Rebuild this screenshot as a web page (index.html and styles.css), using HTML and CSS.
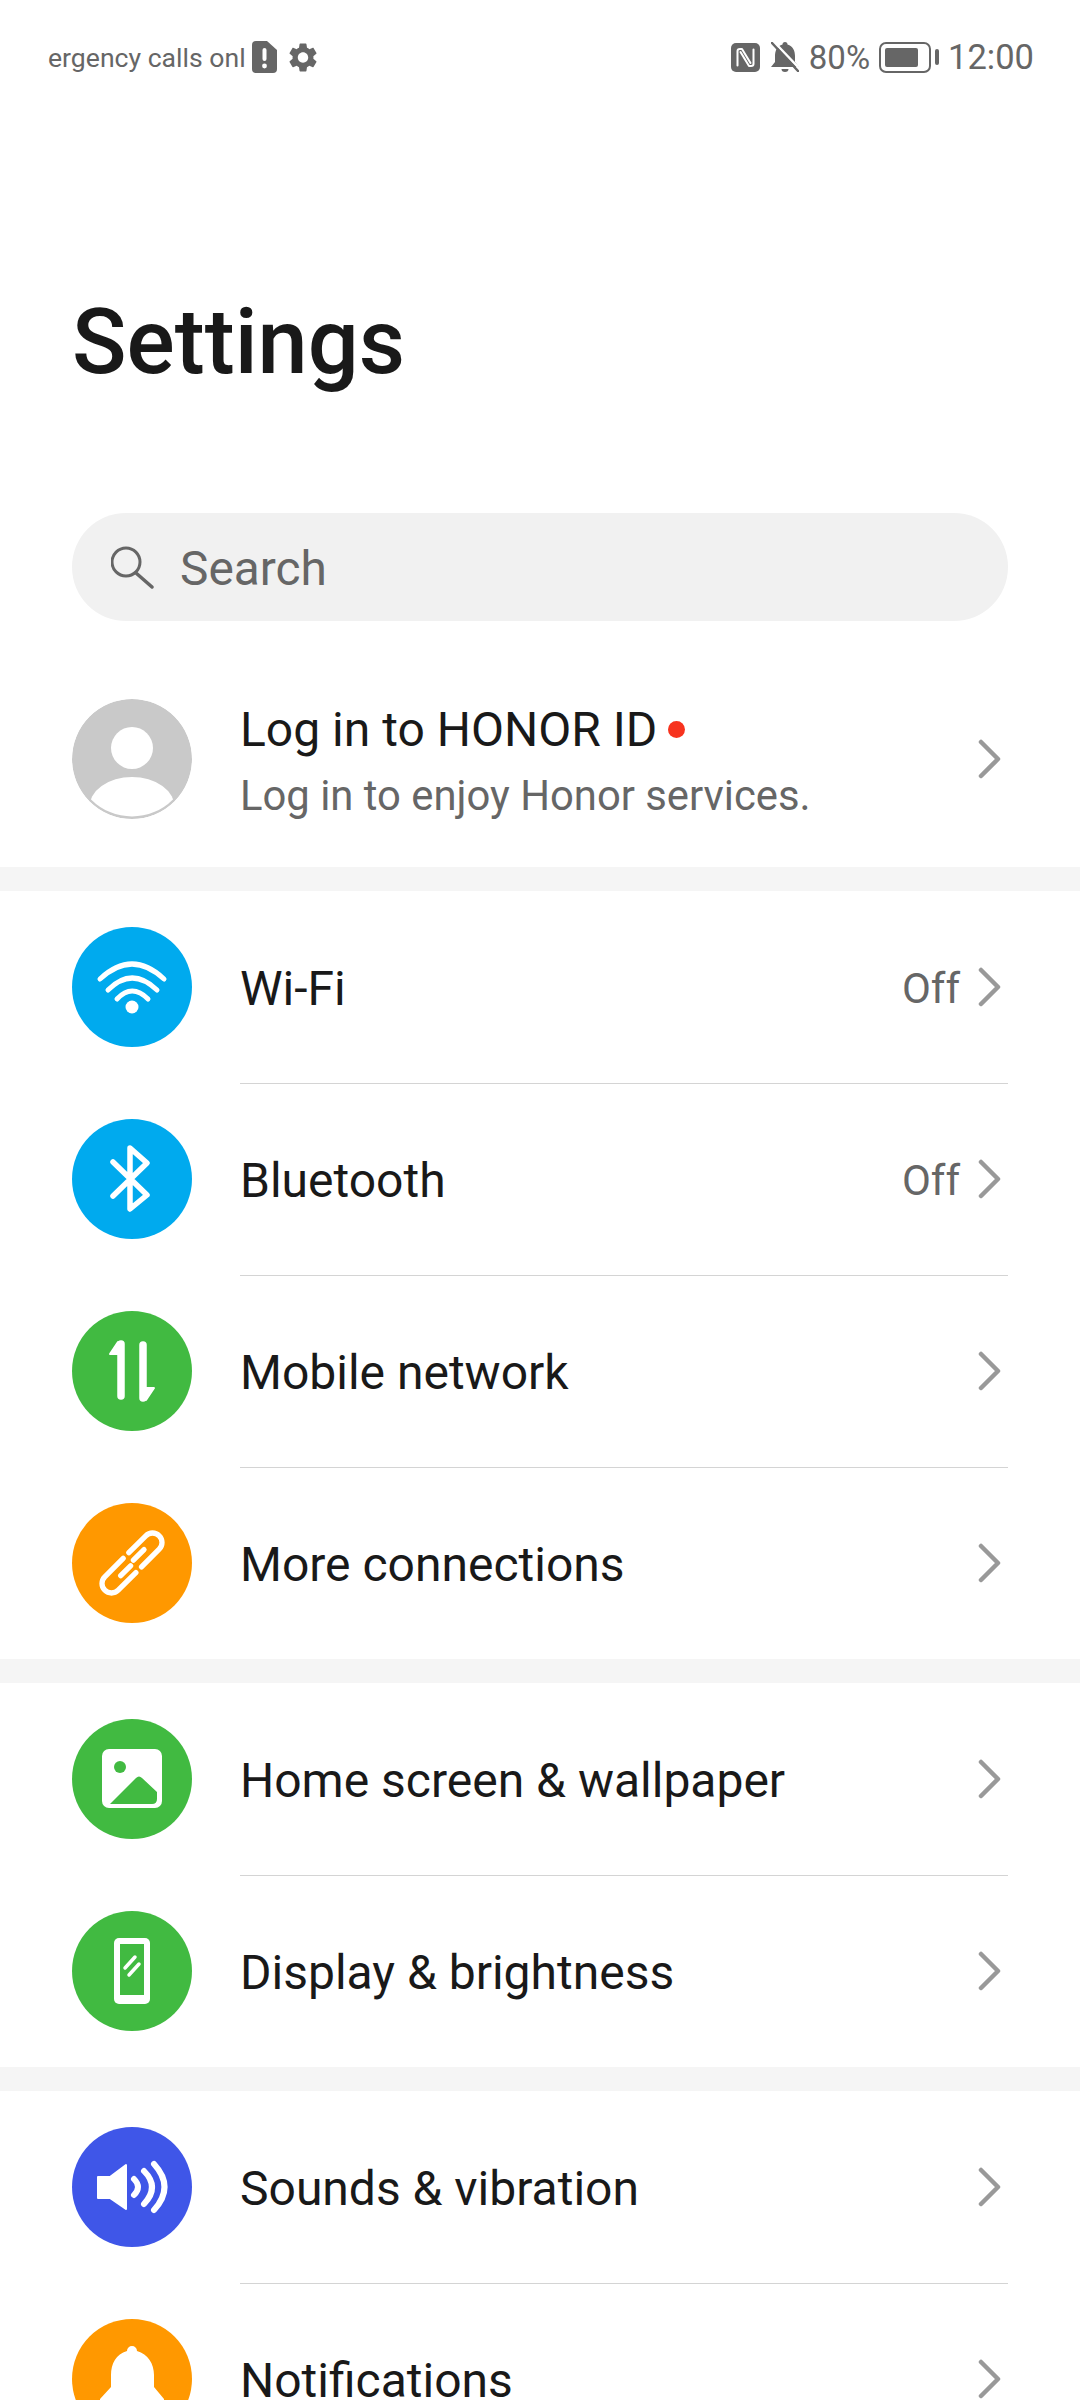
FILE: index.html
```html
<!DOCTYPE html>
<html lang="en">
<head>
  <meta charset="UTF-8" />
  <title>Settings</title>
  <link rel="stylesheet" href="styles.css">
</head>
<body>

  <svg class="defs" width="0" height="0">
    <symbol id="chev" viewBox="0 0 24 40">
      <path d="M3 3 L20 20 L3 37" fill="none" stroke="#999" stroke-width="4.5" stroke-linecap="round" stroke-linejoin="round"/>
    </symbol>
  </svg>

  <div class="status-bar">
    <div class="status-left">
      <span class="carrier">ergency calls onl</span>
      <svg class="st-sim" viewBox="0 0 25 32">
        <path d="M4 0 H15 L25 9 V28 a4 4 0 0 1 -4 4 H4 a4 4 0 0 1 -4 -4 V4 a4 4 0 0 1 4 -4z" fill="#666"/>
        <rect x="10.5" y="7" width="4" height="13" rx="2" fill="#fff"/>
        <circle cx="12.5" cy="25" r="2.4" fill="#fff"/>
      </svg>
      <svg class="st-gear" viewBox="2.4 2 19.2 20">
        <path fill="#666" d="M19.14 12.94c.04-.3.06-.61.06-.94 0-.32-.02-.64-.07-.94l2.03-1.58c.18-.14.23-.41.12-.61l-1.92-3.32c-.12-.22-.37-.29-.59-.22l-2.39.96c-.5-.38-1.03-.7-1.62-.94l-.36-2.54c-.04-.24-.24-.41-.48-.41h-3.84c-.24 0-.43.17-.47.41l-.36 2.54c-.59.24-1.13.57-1.62.94l-2.39-.96c-.22-.08-.47 0-.59.22L2.74 8.87c-.12.21-.08.47.12.61l2.03 1.58c-.05.3-.09.63-.09.94s.02.64.07.94l-2.03 1.58c-.18.14-.23.41-.12.61l1.92 3.32c.12.22.37.29.59.22l2.39-.96c.5.38 1.03.7 1.62.94l.36 2.54c.05.24.24.41.48.41h3.84c.24 0 .44-.17.47-.41l.36-2.54c.59-.24 1.13-.56 1.62-.94l2.39.96c.22.08.47 0 .59-.22l1.92-3.32c.12-.22.07-.47-.12-.61l-2.01-1.58zM12 15.6c-1.98 0-3.6-1.62-3.6-3.6s1.62-3.6 3.6-3.6 3.6 1.62 3.6 3.6-1.62 3.6-3.6 3.6z"/>
      </svg>
    </div>
    <div class="status-right">
      <svg class="st-nfc" viewBox="0 0 29 29">
        <rect width="29" height="29" rx="5" fill="#666"/>
        <g fill="none" stroke="#fff" stroke-width="2" stroke-linejoin="round" stroke-linecap="round">
          <path d="M6.500 22.500 V8 Q6.500 6 9 6 H11 L19.500 20"/>
          <path d="M22.500 6.500 V21 Q22.500 23 20 23 H18 L9.500 9"/>
        </g>
      </svg>
      <svg class="st-bell" viewBox="0 0 28 30">
        <path d="M14 0 a2.5 2.5 0 0 1 2.500 2.500 C22 4 24 9 24 14 V20 L28 25 H0 L4 20 V14 C4 9 6 4 11.500 2.500 A2.500 2.500 0 0 1 14 0z" fill="#666"/>
        <path d="M10.500 27 H17.500 a3.500 3 0 0 1 -7 0z" fill="#666"/>
        <path d="M3 0 L29 27" stroke="#fff" stroke-width="2.500"/>
        <path d="M1 1 L27 29" stroke="#666" stroke-width="2.500" stroke-linecap="round"/>
      </svg>
      <span class="st-pct">80%</span>
      <div class="battery">
        <div class="battery-fill"></div>
      </div>
      <div class="battery-nub"></div>
      <span class="st-time">12:00</span>
    </div>
  </div>

  <h1 class="page-title">Settings</h1>

  <div class="search">
    <svg class="search-icon" viewBox="0 0 44 44">
      <circle cx="15" cy="17" r="14" fill="none" stroke="#666" stroke-width="3"/>
      <path d="M25 28 L41 42" stroke="#666" stroke-width="3.500" stroke-linecap="round"/>
    </svg>
    <span>Search</span>
  </div>

  <div class="account">
    <svg class="icon" viewBox="0 0 120 120">
      <defs><clipPath id="avatarClip"><circle cx="60" cy="60" r="57.500"/></clipPath></defs>
      <circle cx="60" cy="60" r="60" fill="#c9c9c9"/>
      <circle cx="60" cy="49" r="21" fill="#fff"/>
      <ellipse cx="60" cy="109" rx="43" ry="31" fill="#fff" clip-path="url(#avatarClip)"/>
    </svg>
    <div class="account-text">
      <div class="account-title">Log in to HONOR ID<span class="red-dot"></span></div>
      <div class="account-sub">Log in to enjoy Honor services.</div>
    </div>
    <svg class="chev"><use href="#chev"/></svg>
  </div>

  <div class="gap"></div>

  <div class="group">
    <div class="row">
      <svg class="icon blue" viewBox="0 0 120 120">
        <g fill="none" stroke="#fff" stroke-width="5" stroke-linecap="round">
          <path d="M28 52 Q60 22 92 52"/>
          <path d="M36 63 Q60 39 85 63"/>
          <path d="M45 72 Q60 56 76 72"/>
        </g>
        <circle cx="60" cy="80" r="6.500" fill="#fff"/>
      </svg>
      <div class="row-body">
        <span class="row-label">Wi-Fi</span>
        <span class="row-value">Off</span>
        <svg class="chev"><use href="#chev"/></svg>
      </div>
    </div>
    <div class="row">
      <svg class="icon blue" viewBox="0 0 120 120">
        <path d="M41 43 L75 76 L58 90 V29 L75 44 L41 77" fill="none" stroke="#fff" stroke-width="5.500" stroke-linecap="round" stroke-linejoin="round"/>
      </svg>
      <div class="row-body">
        <span class="row-label">Bluetooth</span>
        <span class="row-value">Off</span>
        <svg class="chev"><use href="#chev"/></svg>
      </div>
    </div>
    <div class="row">
      <svg class="icon green" viewBox="0 0 120 120">
        <g fill="#fff" stroke="#fff" stroke-linejoin="round" stroke-width="2">
          <path d="M46 31 L38 43 H46z"/>
          <path d="M74 89 L82 77 H74z"/>
        </g>
        <g stroke="#fff" stroke-width="7.500" stroke-linecap="round">
          <path d="M49 33 V85"/>
          <path d="M71 34 V87"/>
        </g>
      </svg>
      <div class="row-body">
        <span class="row-label">Mobile network</span>
        <svg class="chev"><use href="#chev"/></svg>
      </div>
    </div>
    <div class="row">
      <svg class="icon orange" viewBox="0 0 120 120">
        <g transform="rotate(-45 60 60)" fill="none" stroke="#fff" stroke-width="5.300" stroke-linecap="round">
          <path d="M57 50.500 H31 a9.500 9.500 0 0 0 0 19 H56"/>
          <path d="M64 69.500 H89 a9.500 9.500 0 0 0 0 -19 H65"/>
          <path d="M43 61 H57"/>
          <path d="M63 59 H78"/>
        </g>
      </svg>
      <div class="row-body">
        <span class="row-label">More connections</span>
        <svg class="chev"><use href="#chev"/></svg>
      </div>
    </div>
  </div>

  <div class="gap"></div>

  <div class="group">
    <div class="row">
      <svg class="icon green" viewBox="0 0 120 120">
        <rect x="30" y="30" width="60" height="59" rx="7" fill="#fff"/>
        <circle cx="48" cy="48" r="6" fill="#41ba41"/>
        <path d="M38 85 L64 59 Q67 56 70 59 L85 73 V80 Q85 85 80 85z" fill="#41ba41"/>
      </svg>
      <div class="row-body">
        <span class="row-label">Home screen &amp; wallpaper</span>
        <svg class="chev"><use href="#chev"/></svg>
      </div>
    </div>
    <div class="row">
      <svg class="icon green" viewBox="0 0 120 120">
        <rect x="42" y="27" width="36" height="66" rx="5" fill="#fff"/>
        <rect x="48" y="33" width="24" height="51" fill="#41ba41"/>
        <path d="M53 57 L63 46 M57 64 L67 53" stroke="#fff" stroke-width="3.500" stroke-linecap="round"/>
      </svg>
      <div class="row-body">
        <span class="row-label">Display &amp; brightness</span>
        <svg class="chev"><use href="#chev"/></svg>
      </div>
    </div>
  </div>

  <div class="gap"></div>

  <div class="group">
    <div class="row">
      <svg class="icon indigo" viewBox="0 0 120 120">
        <path d="M26 50 H38 L54 38 V82 L38 71 H26z" fill="#fff" stroke="#fff" stroke-width="2" stroke-linejoin="round"/>
        <g fill="none" stroke="#fff" stroke-width="6" stroke-linecap="round">
          <path d="M62 52 Q70 60 62 68"/>
          <path d="M72 44 Q88 60 72 77"/>
          <path d="M82 37 Q103 60 82 83"/>
        </g>
      </svg>
      <div class="row-body">
        <span class="row-label">Sounds &amp; vibration</span>
        <svg class="chev"><use href="#chev"/></svg>
      </div>
    </div>
    <div class="row">
      <svg class="icon orange" viewBox="0 0 120 120">
        <path d="M60 27 a5 5 0 0 1 5 5 C76 35 82 45 82 56 V68 L92 80 V100 H28 V80 L39 68 V56 C39 45 44 35 55 32 a5 5 0 0 1 5 -5z" fill="#fff"/>
      </svg>
      <div class="row-body">
        <span class="row-label">Notifications</span>
        <svg class="chev"><use href="#chev"/></svg>
      </div>
    </div>
  </div>

</body>
</html>
```
FILE: styles.css
```css
html, body {
  margin: 0;
  height: 2400px;
  overflow: hidden;
}

body {
  font-family: Roboto, "Noto Sans", sans-serif;
  background-color: #fff;
  color: #191919;
}

.defs {
  display: block;
  height: 0;
}

.status-bar {
  display: flex;
  justify-content: space-between;
  align-items: center;
  height: 114px;
  padding: 0 46px 0 48px;
  color: #666;
}

.status-left, .status-right {
  display: flex;
  align-items: center;
}

.carrier {
  font-size: 26.6px;
  width: 198px;
  margin-right: 6px;
  white-space: nowrap;
  overflow: hidden;
}

.st-sim {
  width: 25px;
  height: 32px;
  margin-right: 12px;
}

.st-gear {
  width: 28px;
  height: 29px;
}

.st-nfc {
  width: 29px;
  height: 29px;
  margin-right: 11px;
}

.st-bell {
  width: 28px;
  height: 30px;
  margin-right: 10px;
}

.st-pct {
  font-size: 33px;
  margin-right: 9px;
}

.battery {
  box-sizing: border-box;
  width: 52px;
  height: 31px;
  padding: 4px;
  border: 2px solid #666;
  border-radius: 7px;
}

.battery-fill {
  width: 33px;
  height: 100%;
  background-color: #666;
  border-radius: 2px;
}

.battery-nub {
  width: 4px;
  height: 16px;
  margin: 0 9px 0 4px;
  background-color: #666;
  border-radius: 2px;
}

.st-time {
  font-size: 34.5px;
}

.page-title {
  margin: 179px 0 0 72px;
  font-size: 90px;
  line-height: 100px;
  font-weight: 500;
}

.search {
  display: flex;
  align-items: center;
  height: 108px;
  margin: 120px 72px 0;
  padding-left: 39px;
  background-color: #f1f1f1;
  border-radius: 54px;
  font-size: 47.8px;
  color: #666;
}

.search span {
  padding-top: 4px;
}

.search-icon {
  width: 44px;
  height: 44px;
  margin-right: 25px;
}

.account {
  display: flex;
  align-items: center;
  box-sizing: border-box;
  height: 246px;
  padding: 30px 72px 0;
}

.icon {
  flex: none;
  width: 120px;
  height: 120px;
  margin-right: 48px;
  border-radius: 50%;
}

.blue { background-color: #00aaee; }
.green { background-color: #41ba41; }
.orange { background-color: #ff9800; }
.indigo { background-color: #3f56e8; }

.account-text {
  flex: 1;
  padding-top: 9px;
}

.account-title {
  display: flex;
  align-items: center;
  font-size: 48px;
  line-height: 64px;
}

.red-dot {
  width: 17px;
  height: 17px;
  margin-left: 11px;
  background-color: #f7331e;
  border-radius: 50%;
}

.account-sub {
  font-size: 41.8px;
  line-height: 68px;
  color: #666;
}

.chev {
  flex: none;
  width: 24px;
  height: 40px;
  margin-right: 6px;
}

.gap {
  height: 24px;
  background-color: #f5f5f5;
}

.row {
  display: flex;
  align-items: center;
  height: 192px;
  padding: 0 72px;
}

.row-body {
  flex: 1;
  display: flex;
  align-items: center;
  align-self: flex-start;
  height: 100%;
  border-bottom: 1px solid #d4d4d4;
}

.row:last-child .row-body {
  border-bottom: none;
}

.row-label {
  flex: 1;
  padding-top: 2px;
  font-size: 48px;
}

.row-value {
  margin-right: 18px;
  padding-top: 2px;
  font-size: 42px;
  color: #666;
}
```
